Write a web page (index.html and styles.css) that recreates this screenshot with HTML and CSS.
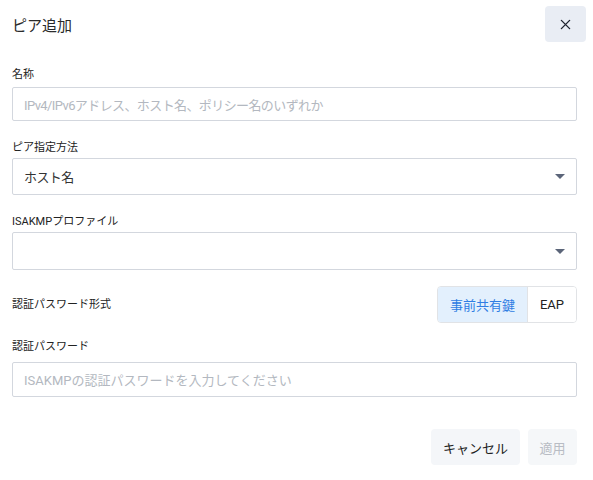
FILE: index.html
```html
<!DOCTYPE html>
<html lang="ja">
<head>
<meta charset="utf-8">
<link rel="stylesheet" href="styles.css">
</head>
<body>
<div class="dialog">
  <div class="header">
    <h1 class="title">ピア追加</h1>
    <button class="close" aria-label="閉じる">
      <svg width="11" height="11" viewBox="0 0 12 12"><path d="M1.5 1.5 L10.5 10.5 M10.5 1.5 L1.5 10.5" stroke="#1f2430" stroke-width="1.5" stroke-linecap="round"/></svg>
    </button>
  </div>

  <div class="field f1">
    <label class="label">名称</label>
    <div class="input placeholder tight">IPv4/IPv6アドレス、ホスト名、ポリシー名のいずれか</div>
  </div>

  <div class="field f2">
    <label class="label">ピア指定方法</label>
    <div class="input select"><span class="tight">ホスト名</span><span class="caret"></span></div>
  </div>

  <div class="field f3">
    <label class="label">ISAKMPプロファイル</label>
    <div class="input select"><span></span><span class="caret"></span></div>
  </div>

  <div class="row">
    <span class="label">認証パスワード形式</span>
    <div class="toggle">
      <span class="seg active">事前共有鍵</span>
      <span class="seg">EAP</span>
    </div>
  </div>

  <div class="field f5">
    <label class="label">認証パスワード</label>
    <div class="input placeholder short">ISAKMPの認証パスワードを入力してください</div>
  </div>

  <div class="footer">
    <button class="btn cancel">キャンセル</button>
    <button class="btn apply">適用</button>
  </div>
</div>
</body>
</html>
```
FILE: styles.css
```css
* { box-sizing: border-box; }
html, body { margin: 0; padding: 0; background: #fff; }
body {
  font-family: "Roboto", "Noto Sans CJK JP", sans-serif;
  color: #222;
}
.dialog {
  width: 593px;
  padding: 6px 16px 0 12px;
  display: flex;
  flex-direction: column;
}
.header {
  display: flex;
  justify-content: space-between;
  align-items: center;
  height: 36px;
}
.title {
  margin: 0;
  font-size: 15px;
  font-weight: 400;
  color: #2a2a2a;
}
.close {
  width: 41px;
  height: 36px;
  margin-right: -9px;
  border: none;
  border-radius: 4px;
  background: #e9edf4;
  display: flex;
  align-items: center;
  justify-content: center;
  padding: 0;
}
.field { display: flex; flex-direction: column; }
.label {
  font-size: 11px;
  line-height: 16px;
  color: #222;
  height: 16px;
}
.field .label { margin-bottom: 4px; }
.f1 { margin-top: 25px; }
.f2 { margin-top: 19px; }
.f2 .label, .f3 .label { margin-bottom: 2px; }
.f3 { margin-top: 19px; }
.f5 { margin-top: 16px; }
.f5 .label { margin-bottom: 7px; }
.input {
  height: 34px;
  border: 1px solid #d3d7de;
  border-radius: 2px;
  padding: 0 11px;
  display: flex;
  align-items: center;
  font-size: 13px;
  color: #333;
}
.tight { letter-spacing: -0.6px; }
.input.short { height: 35px; }
.placeholder { color: #b3b8c0; }
.select {
  height: 37px;
  justify-content: space-between;
  padding-right: 11px;
}
.f3 .select { height: 38px; }
.caret {
  width: 0;
  height: 0;
  border-left: 5px solid transparent;
  border-right: 5px solid transparent;
  border-top: 5px solid #5b6579;
}
.row {
  margin-top: 16px;
  height: 37px;
  display: flex;
  justify-content: space-between;
  align-items: center;
}
.toggle {
  display: flex;
  height: 37px;
  border: 1px solid #e1e3e6;
  border-radius: 4px;
  overflow: hidden;
}
.seg {
  display: flex;
  align-items: center;
  justify-content: center;
  font-size: 13px;
  color: #222;
  width: 48px;
  background: #fff;
}
.seg.active {
  width: 90px;
  background: #e3f0fd;
  color: #2f7de3;
  border-right: 1px solid #e1e3e6;
}
.footer {
  margin-top: 32px;
  display: flex;
  justify-content: flex-end;
  gap: 8px;
}
.btn {
  height: 36px;
  border: none;
  border-radius: 4px;
  font-family: inherit;
  font-size: 13px;
  padding: 0;
}
.cancel { width: 89px; background: #f4f6f9; color: #222; }
.apply { width: 49px; background: #f5f7f9; color: #b8bcc4; }
```
